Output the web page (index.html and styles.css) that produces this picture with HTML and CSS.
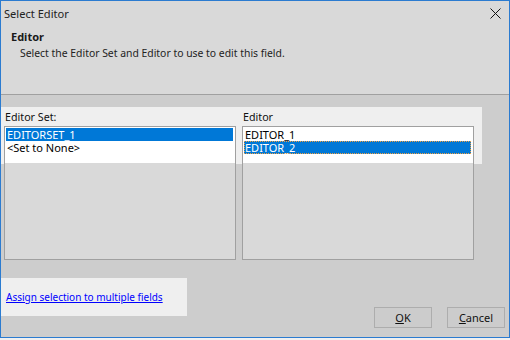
FILE: index.html
```html
<!DOCTYPE html>
<html>
<head>
<meta charset="utf-8">
<link rel="stylesheet" href="styles.css">
</head>
<body>
<div class="window">
  <div class="top">
    <div class="titlebar">
      <span class="title">Select Editor</span>
      <svg class="close" width="11" height="11" viewBox="0 0 11 11"><path d="M0.5 0.5 L10.5 10.5 M10.5 0.5 L0.5 10.5" stroke="#111" stroke-width="1" fill="none"/></svg>
    </div>
    <div class="header">
      <div class="h-title">Editor</div>
      <div class="h-desc">Select the Editor Set and Editor to use to edit this field.</div>
    </div>
  </div>
  <div class="body">
    <div class="lists">
      <div class="group">
        <div class="label">Editor Set:</div>
        <div class="listbox">
          <div class="item selected">EDITORSET_1</div>
          <div class="item">&lt;Set to None&gt;</div>
        </div>
      </div>
      <div class="group">
        <div class="label">Editor</div>
        <div class="listbox">
          <div class="item">EDITOR_1</div>
          <div class="item selected focus">EDITOR_2</div>
        </div>
      </div>
    </div>
    <div class="bottom">
      <div class="linkpanel"><a class="link" href="#">Assign selection to multiple fields</a></div>
      <div class="buttons">
        <div class="btn"><u>O</u>K</div>
        <div class="btn"><u>C</u>ancel</div>
      </div>
    </div>
  </div>
</div>
</body>
</html>
```
FILE: styles.css
```css
html, body {
  margin: 0;
  padding: 0;
  background: #f0f0f0;
}
body {
  font-family: "Noto Sans", sans-serif;
  font-size: 10.5px;
  color: #000;
}
.window {
  width: 510px;
  height: 338px;
  box-sizing: border-box;
  border: 1px solid #2b7bd0;
  display: flex;
  flex-direction: column;
  overflow: hidden;
}
.top {
  background: #d9d9d9;
  height: 93px;
  border-bottom: 1px solid #a0a0a0;
  flex: none;
}
.titlebar {
  height: 25px;
  display: flex;
  align-items: center;
  justify-content: space-between;
  padding: 0 8px 0 3px;
}
.title {
  font-size: 11.1px;
  color: #222;
  line-height: 16px;
}
.close {
  display: block;
}
.header {
  padding: 3px 0 0 10px;
}
.h-title {
  font-weight: bold;
  font-size: 11px;
  line-height: 16px;
  color: #1a1a1a;
}
.h-desc {
  padding-left: 9px;
  font-size: 10.4px;
  line-height: 16px;
  color: #222;
}
.body {
  flex: 1;
  background: #cdcdcd;
  padding-top: 12px;
}
.lists {
  display: flex;
  gap: 6px;
  padding-left: 3px;
  background: linear-gradient(#efefef, #efefef) no-repeat 0 0 / 481px 57px;
}
.group {
  width: 232px;
}
.label {
  height: 19px;
  line-height: 21px;
  padding-left: 1px;
  font-size: 10.7px;
  color: #111;
}
.listbox {
  height: 134px;
  box-sizing: border-box;
  border: 1px solid #a0a0a0;
  padding: 1px 2px 0 1px;
  background: linear-gradient(#fff, #fff) no-repeat 0 0 / 100% 36px, #d9d9d9;
}
.item {
  height: 13px;
  line-height: 13px;
  padding-left: 1px;
  font-size: 11px;
  white-space: nowrap;
}
.item.selected {
  background: #0078d7;
  color: #fff;
}
.item.focus {
  outline: 1px dotted #f0a040;
  outline-offset: -1px;
}
.bottom {
  display: flex;
  justify-content: space-between;
  margin-top: 18px;
}
.linkpanel {
  width: 186px;
  height: 38px;
  background: #efefef;
  display: flex;
  align-items: center;
  padding-left: 5px;
  box-sizing: border-box;
}
.link {
  color: #0000ff;
  text-decoration: underline;
  font-size: 10px;
  white-space: nowrap;
}
.buttons {
  display: flex;
  gap: 15px;
  margin-top: 29px;
  padding-right: 4px;
}
.btn {
  width: 58px;
  height: 21px;
  box-sizing: border-box;
  border: 1px solid #adadad;
  background: #cccccc;
  display: flex;
  align-items: center;
  justify-content: center;
  font-size: 11px;
  color: #111;
}
.btn u {
  text-decoration: underline;
}
```
